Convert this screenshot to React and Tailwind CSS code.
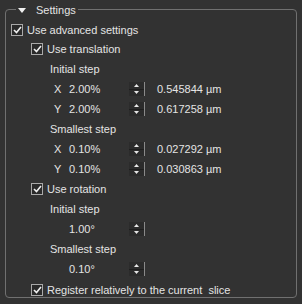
import React from 'react'

const font = { fontFamily: "'Liberation Sans', Arial, sans-serif" }

const Check = () => (
    <span className="w-[12px] h-[12px] border border-[#a9a9a9] bg-[#2a2a2a] flex items-center justify-center shrink-0">
        <svg width="9" height="8" viewBox="0 0 9 8">
            <path d="M1 4 L3.5 6.5 L8 1" stroke="#f0f0f0" strokeWidth="1.6" fill="none" />
        </svg>
    </span>
)

const CheckRow = ({ label, className = '' }) => (
    <div className={`flex items-center gap-[4px] h-[20px] ${className}`}>
        <Check />
        <span className="whitespace-pre">{label}</span>
    </div>
)

const Spinner = () => (
    <div className="w-[16px] h-[14px] flex flex-col border-r border-[#8a8a8a] bg-[#2b2b2b]">
        <div className="flex-1 flex items-center justify-center border-b border-[#1e1e1e]">
            <svg width="5" height="3" viewBox="0 0 5 3"><path d="M2.5 0 L5 3 L0 3 Z" fill="#e6e6e6" /></svg>
        </div>
        <div className="flex-1 flex items-center justify-center">
            <svg width="5" height="3" viewBox="0 0 5 3"><path d="M0 0 L5 0 L2.5 3 Z" fill="#e6e6e6" /></svg>
        </div>
    </div>
)

const ValueRow = ({ axis, value, um }) => (
    <div className="flex items-center h-[20px]">
        <span className="w-[19px] pl-[4px]">{axis}</span>
        <span className="w-[60px]">{value}</span>
        <Spinner />
        {um && <span className="ml-[12px]">{um}</span>}
    </div>
)

const Label = ({ children }) => (
    <div className="h-[20px] flex items-center">{children}</div>
)

export default function App() {
    return (
        <div className="w-[302px] h-[304px] bg-[#323232] text-[#e4e4e4] text-[11px] pt-[3px] px-[5px]" style={font}>
            <div className="relative border border-[#707070] rounded-[4px] h-[289px] mt-[6px] pt-[9px] pl-[5px]">
                <div className="absolute -top-[8px] left-[10px] flex items-center gap-[10px] bg-[#323232] px-[2px]">
                    <svg width="8" height="5" viewBox="0 0 8 5"><path d="M0 0 L8 0 L4 5 Z" fill="#f0f0f0" /></svg>
                    <span>Settings</span>
                </div>
                <CheckRow label="Use advanced settings" className="mt-[1px]" />
                <div className="pl-[20px]">
                    <CheckRow label="Use translation" className="-mt-[1px]" />
                    <div className="pl-[19px]">
                        <Label>Initial step</Label>
                        <ValueRow axis="X" value="2.00%" um="0.545844 µm" />
                        <ValueRow axis="Y" value="2.00%" um="0.617258 µm" />
                        <Label>Smallest step</Label>
                        <ValueRow axis="X" value="0.10%" um="0.027292 µm" />
                        <ValueRow axis="Y" value="0.10%" um="0.030863 µm" />
                    </div>
                    <CheckRow label="Use rotation" />
                    <div className="pl-[19px]">
                        <Label>Initial step</Label>
                        <ValueRow axis="" value="1.00°" />
                        <Label>Smallest step</Label>
                        <ValueRow axis="" value="0.10°" />
                    </div>
                    <CheckRow label="Register relatively to the current  slice" className="mt-[1px]" />
                </div>
            </div>
        </div>
    )
}
